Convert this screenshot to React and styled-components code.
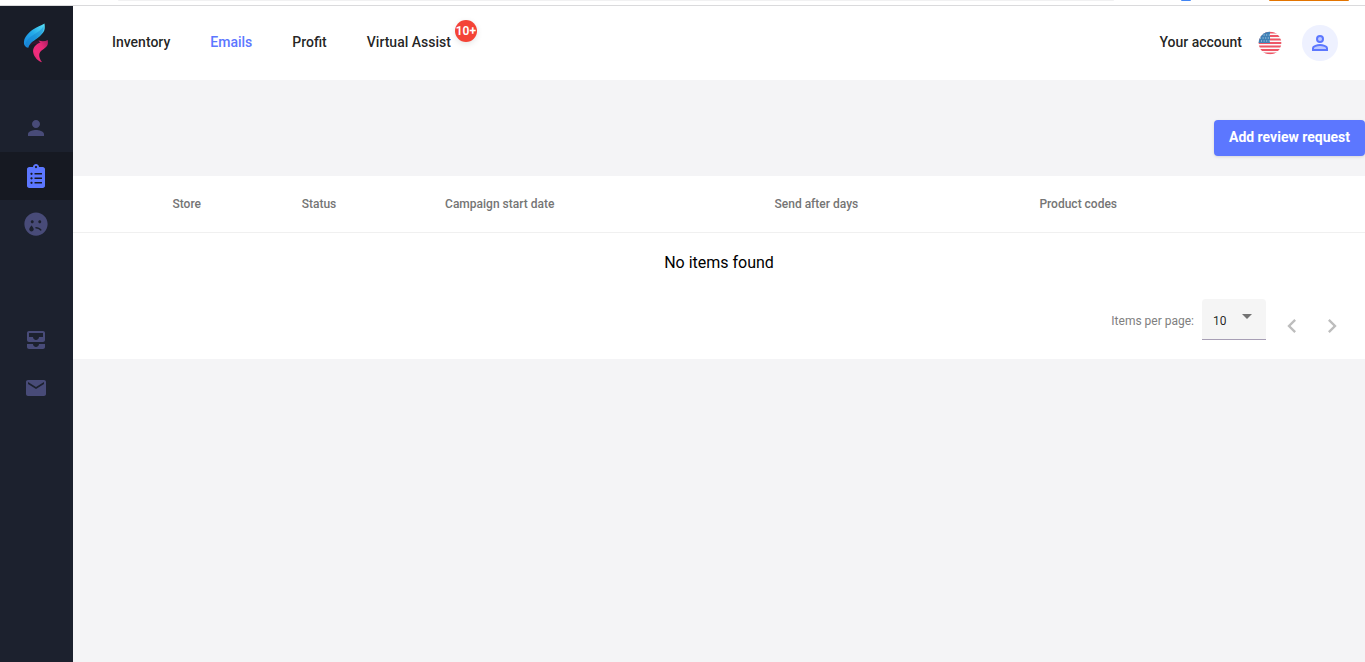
import React from "react";
import styled, { createGlobalStyle } from "styled-components";
import { MdPerson, MdAllInbox, MdEmail, MdChevronLeft, MdChevronRight, MdArrowDropDown } from "react-icons/md";
import { FaClipboardList, FaSadTear } from "react-icons/fa";

const GlobalStyle = createGlobalStyle`
* {
    box-sizing: border-box;
}
body {
    margin: 0;
    background: #f4f4f6;
    font-family: Roboto, "Liberation Sans", sans-serif;
    color: rgba(0, 0, 0, 0.87);
}
`

const Page = styled.div`
display: flex;
flex-direction: column;
min-height: 100vh;
`

// bottom edge of the browser toolbar
const TopStrip = styled.div`
display: flex;
align-items: flex-start;
height: 6px;
padding: 0 16px 0 118px;
background: white;
border-bottom: 1px solid #dadadc;
`

const StripPiece = styled.div`
flex: ${(props) => (props.$width ? `0 0 ${props.$width}` : "1")};
height: 1px;
margin-left: ${(props) => props.$gap || "0"};
background: ${(props) => props.$color};
border-radius: 0 0 2px 2px;
`

const Body = styled.div`
display: flex;
flex: 1;
`

const SideBar = styled.aside`
flex: 0 0 73px;
background: #1c212e;
`

const LogoLink = styled.a`
display: flex;
align-items: center;
justify-content: center;
height: 74px;
padding-right: 1px;
background: #191d28;
`

const SideNav = styled.nav`
display: flex;
flex-direction: column;
padding-top: 24px;
`

const SideGroup = styled.div`
margin-bottom: 68px;
`

const SideLink = styled.a`
display: flex;
align-items: center;
justify-content: center;
height: 48px;
padding-right: 1px;
color: ${(props) => (props.$active ? "#5c77ff" : "#484b78")};
background: ${(props) => (props.$active ? "#161922" : "transparent")};
`

const Main = styled.div`
flex: 1;
min-width: 0;
`

const Header = styled.header`
display: flex;
align-items: center;
justify-content: space-between;
height: 74px;
padding: 0 27px 0 39px;
background: white;
`

const NavItems = styled.nav`
display: flex;
gap: 40px;
`

const NavLink = styled.a`
position: relative;
padding-bottom: 2px;
font-size: 14px;
font-weight: 500;
line-height: 20px;
text-decoration: none;
color: ${(props) => (props.$active ? "#5c77ff" : "rgba(0, 0, 0, 0.87)")};
`

const Badge = styled.span`
position: absolute;
left: 100%;
bottom: 12px;
margin-left: 4px;
width: 22px;
height: 22px;
border-radius: 50%;
background: #f44336;
color: white;
font-size: 12px;
font-weight: 600;
line-height: 22px;
text-align: center;
box-shadow: 0 2px 6px rgba(0, 0, 0, 0.1);
`

const AccountArea = styled.div`
display: flex;
align-items: center;
`

const FlagButton = styled.button`
display: flex;
margin: 0 20px 0 16px;
padding: 0;
border: none;
background: none;
`

const Avatar = styled.button`
display: flex;
align-items: center;
justify-content: center;
width: 36px;
height: 36px;
padding: 0;
border: none;
border-radius: 50%;
background: #eef1ff;
color: #5c77ff;
`

const Actions = styled.div`
display: flex;
justify-content: flex-end;
padding: 40px 0 20px;
`

const AddButton = styled.button`
height: 36px;
padding: 0 15px 2px;
border: none;
border-radius: 4px;
background: #5c77ff;
color: white;
font-family: inherit;
font-size: 14px;
font-weight: 700;
box-shadow: 0 1px 3px rgba(0, 0, 0, 0.12);
`

const Panel = styled.section`
background: white;
`

const Table = styled.table`
width: 100%;
table-layout: fixed;
border-collapse: separate;
border-spacing: 0;
`

const HeadCell = styled.th`
width: ${(props) => props.$width};
height: 57px;
padding: 0;
border-bottom: 1px solid #f0f0f0;
font-size: 12px;
font-weight: 500;
text-align: left;
color: #757575;
`

const EmptyCell = styled.td`
height: 58px;
padding: 0;
font-size: 16px;
text-align: center;
color: black;
`

const Paginator = styled.div`
display: flex;
align-items: center;
justify-content: flex-end;
height: 68px;
padding: 0 13px 12px 0;
`

const PageLabel = styled.label`
margin-right: 8px;
padding-top: 4px;
font-size: 12px;
color: #808080;
`

const SelectBox = styled.div`
position: relative;
margin-right: 6px;
`

const PageSelect = styled.select`
display: block;
appearance: none;
width: 64px;
height: 41px;
padding: 5px 10px 0 11px;
border: none;
border-bottom: 1px solid #a79fb5;
border-radius: 4px 4px 0 0;
background: #f5f5f5;
font-family: inherit;
font-size: 12px;
color: rgba(0, 0, 0, 0.87);
`

const SelectArrow = styled(MdArrowDropDown)`
position: absolute;
top: 5px;
right: 7px;
color: #737373;
pointer-events: none;
`

const ArrowButton = styled.button`
display: flex;
align-items: center;
justify-content: center;
width: 40px;
height: 40px;
margin-top: 14px;
padding: 0;
border: none;
background: none;
color: #bdbdbd;
`

const Logo = () => (
    <svg width="26" height="40" viewBox="0 0 26 40" aria-hidden="true">
        <defs>
            <linearGradient id="blue" x1="0" y1="1" x2="1" y2="0">
                <stop offset="0" stopColor="#1a86dc" />
                <stop offset="0.5" stopColor="#22a9ea" />
                <stop offset="1" stopColor="#5ae0f4" />
            </linearGradient>
            <linearGradient id="pink" x1="1" y1="0" x2="0" y2="1">
                <stop offset="0" stopColor="#a81d60" />
                <stop offset="0.35" stopColor="#e82a78" />
                <stop offset="0.7" stopColor="#f02d7c" />
                <stop offset="1" stopColor="#c81f66" />
            </linearGradient>
        </defs>
        <path d="M6 21C11 17 17 17 24 18L16 22C13 20 9 21 5 24Z" fill="#35182f" />
        <path d="M21.5 0.5C22 4 22 7 20.5 9C18.5 12 16 14 12.5 16.5C9 19 6.5 20.5 5.3 24.7C2.5 24.5 0.5 22 1 18.5C1.5 14 5 10 10 6.5C14 3.7 18 2.5 21.5 0.5Z" fill="url(#blue)" />
        <path d="M20.5 3C18 8 12 10.5 8 13.5C5 15.8 2.7 18 2.5 22.5L5 24.5C6 20.5 9 18.5 12.5 16C16 13.5 21.5 10 20.5 3Z" fill="#1272c4" opacity="0.35" />
        <path d="M15.5 17.5C19 18.6 22 18.4 24.7 17C25.3 20 25 22.5 22.5 24.5C19.5 27 17 28 16.3 31C15.8 33.5 17 36.5 19 39.2C15 38.2 11.5 34.5 10.3 30C9.3 25.5 12 21.8 17.5 19.3C16.5 19 15.8 18.4 15.5 17.5Z" fill="url(#pink)" />
    </svg>
)

const Flag = () => (
    <svg width="24" height="24" viewBox="0 0 24 24" aria-hidden="true">
        <clipPath id="flagClip"><circle cx="12" cy="12" r="11.3" /></clipPath>
        <g clipPath="url(#flagClip)">
            <path d="M0 0H24V24H0Z" fill="#fafafa" />
            <path d="M0 1.5H24M0 5H24M0 8.5H24M0 12H24M0 15.5H24M0 19H24M0 22.5H24" stroke="#ee5565" strokeWidth="1.8" />
            <path d="M0 0H12V12H0Z" fill="#3f80b5" />
            <path d="M3 4H12M2 7H12M3 10H12" stroke="#c5dbea" strokeWidth="1" strokeDasharray="1 1.6" />
        </g>
    </svg>
)

const ProfileIcon = () => (
    <svg width="24" height="24" viewBox="0 0 24 24" aria-hidden="true">
        <g fill="#bec9ff" stroke="currentColor" strokeWidth="2">
            <circle cx="12" cy="8" r="3" />
            <path d="M12 14C9.3 14 5 15.3 5 17V19H19V17C19 15.3 14.7 14 12 14Z" />
        </g>
    </svg>
)

const columns = [
    { name: "", width: "7.7%" },
    { name: "Store", width: "10%" },
    { name: "Status", width: "11.1%" },
    { name: "Campaign start date", width: "25.5%" },
    { name: "Send after days", width: "20.5%" },
    { name: "Product codes", width: "auto" },
]

const App = () => {
    return (
        <Page>
            <GlobalStyle />
            <TopStrip>
                <StripPiece $color="#f1f1f2" />
                <StripPiece $color="#4285f4" $width="10px" $gap="67px" />
                <StripPiece $color="#e37400" $width="80px" $gap="78px" />
            </TopStrip>
            <Body>
                <SideBar>
                    <LogoLink href="#" aria-label="Home"><Logo /></LogoLink>
                    <SideNav>
                        <SideGroup>
                            <SideLink href="#" aria-label="Customers"><MdPerson size={24} /></SideLink>
                            <SideLink href="#" aria-label="Review requests" $active><FaClipboardList size={24} /></SideLink>
                            <SideLink href="#" aria-label="Complaints"><FaSadTear size={24} /></SideLink>
                        </SideGroup>
                        <SideLink href="#" aria-label="Inbox"><MdAllInbox size={24} /></SideLink>
                        <SideLink href="#" aria-label="Mail"><MdEmail size={24} /></SideLink>
                    </SideNav>
                </SideBar>
                <Main>
                    <Header>
                        <NavItems>
                            <NavLink href="#">Inventory</NavLink>
                            <NavLink href="#" $active>Emails</NavLink>
                            <NavLink href="#">Profit</NavLink>
                            <NavLink href="#">Virtual Assist<Badge>10+</Badge></NavLink>
                        </NavItems>
                        <AccountArea>
                            <NavLink href="#">Your account</NavLink>
                            <FlagButton aria-label="Language"><Flag /></FlagButton>
                            <Avatar aria-label="Profile"><ProfileIcon /></Avatar>
                        </AccountArea>
                    </Header>
                    <Actions>
                        <AddButton>Add review request</AddButton>
                    </Actions>
                    <Panel>
                        <Table>
                            <thead>
                                <tr>
                                    {columns.map((col) => (
                                        <HeadCell key={col.name} $width={col.width}>{col.name}</HeadCell>
                                    ))}
                                </tr>
                            </thead>
                            <tbody>
                                <tr><EmptyCell colSpan={columns.length}>No items found</EmptyCell></tr>
                            </tbody>
                        </Table>
                        <Paginator>
                            <PageLabel htmlFor="pageSize">Items per page:</PageLabel>
                            <SelectBox>
                                <PageSelect id="pageSize" defaultValue="10">
                                    <option>10</option>
                                    <option>25</option>
                                    <option>50</option>
                                </PageSelect>
                                <SelectArrow size={24} />
                            </SelectBox>
                            <ArrowButton aria-label="Previous page" disabled><MdChevronLeft size={28} /></ArrowButton>
                            <ArrowButton aria-label="Next page" disabled><MdChevronRight size={28} /></ArrowButton>
                        </Paginator>
                    </Panel>
                </Main>
            </Body>
        </Page>
    );
}

export default App;
